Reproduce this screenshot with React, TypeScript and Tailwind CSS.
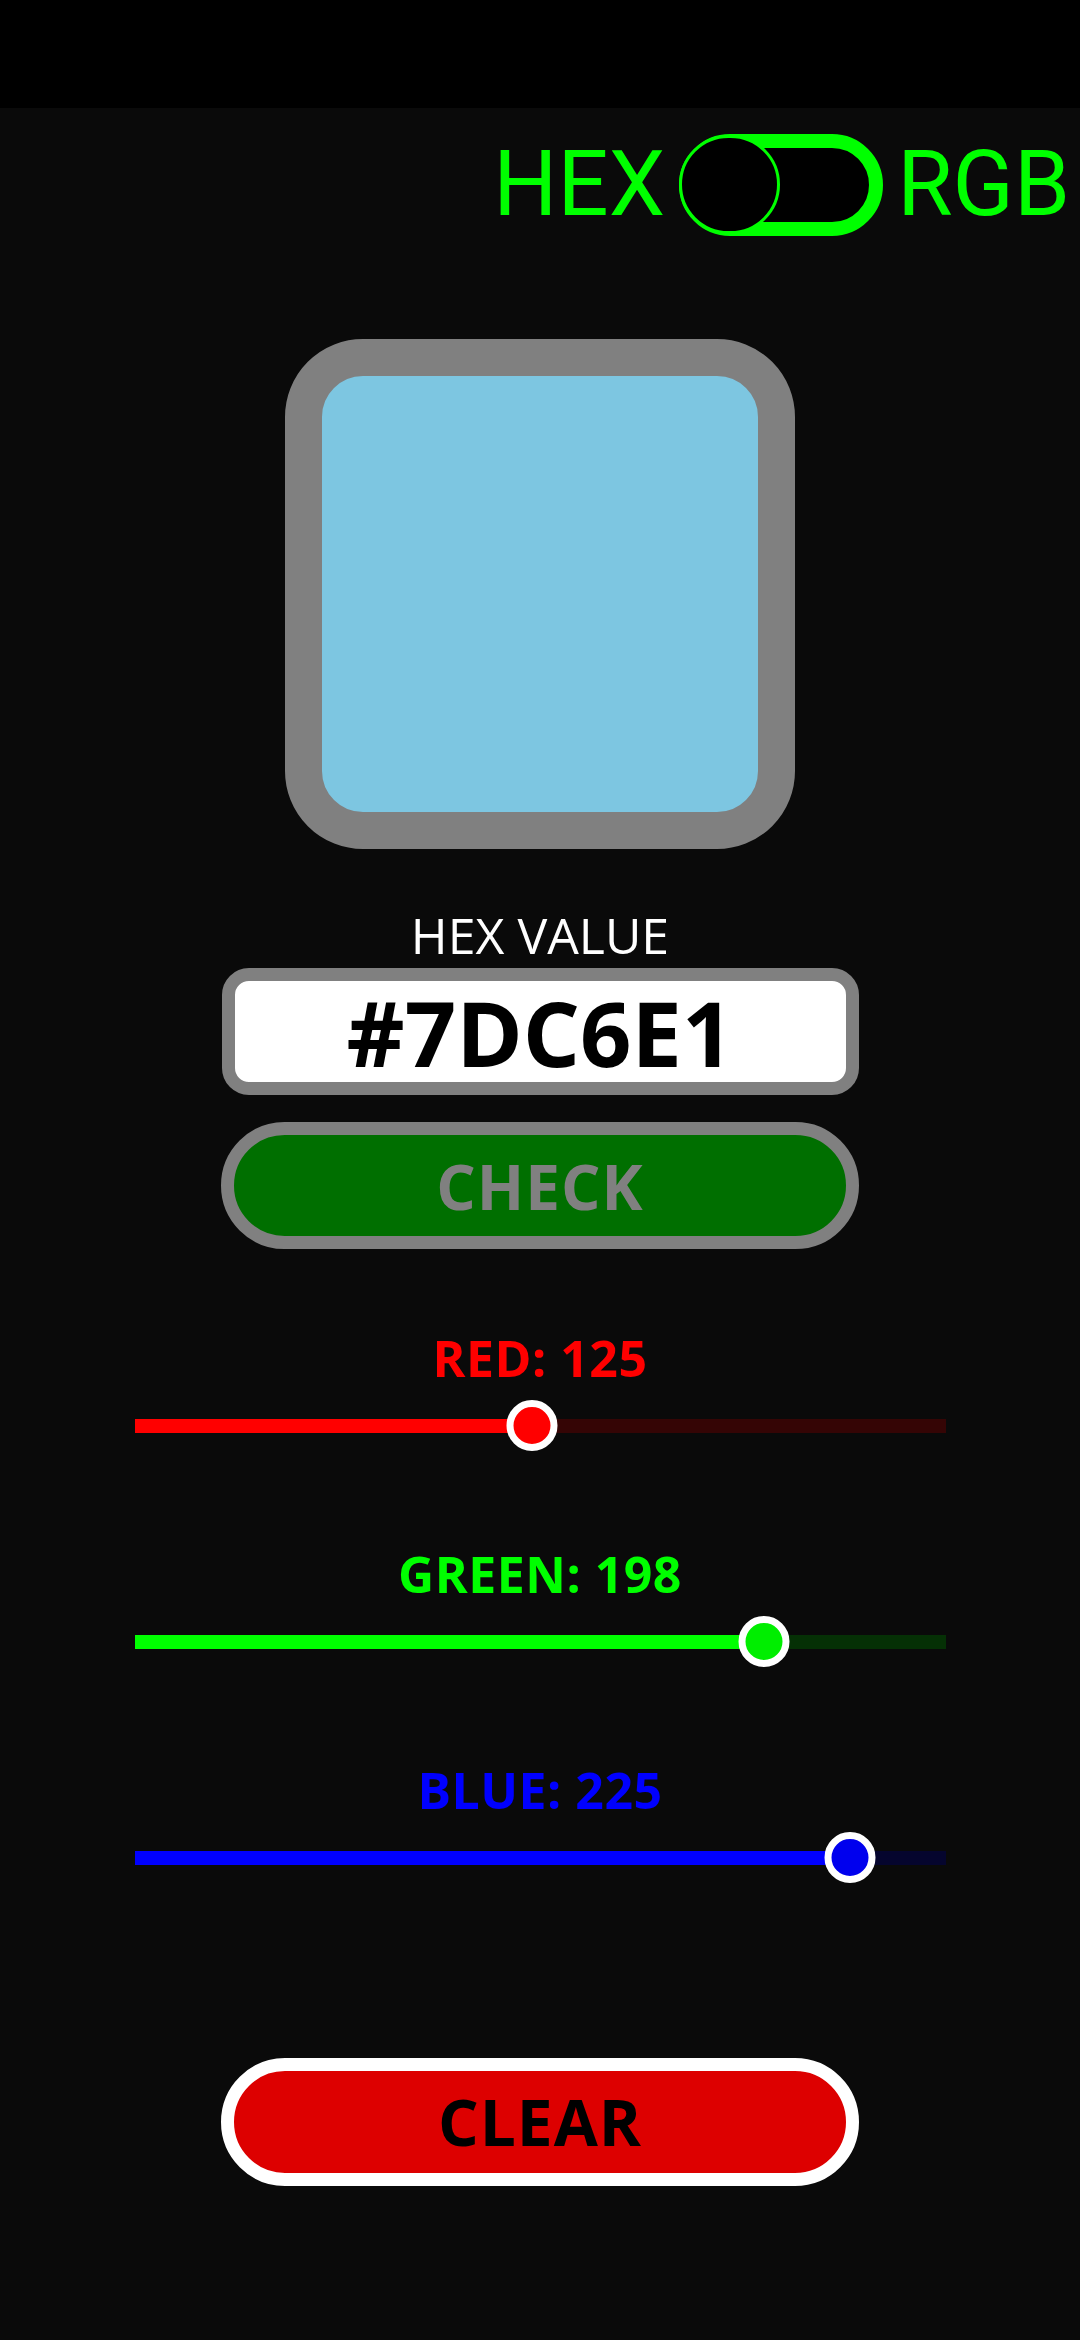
import React from "react";

type SliderDef = {
  label: string;
  value: number;
  textClass: string;
  fillClass: string;
  restClass: string;
  dotClass: string;
};

const sliders: SliderDef[] = [
  { label: "RED", value: 125, textClass: "text-[#ff0000]", fillClass: "bg-[#ff0000]", restClass: "bg-[#350505]", dotClass: "bg-[#ff0000]" },
  { label: "GREEN", value: 198, textClass: "text-[#00ff00]", fillClass: "bg-[#00ff00]", restClass: "bg-[#053005]", dotClass: "bg-[#00ee00]" },
  { label: "BLUE", value: 225, textClass: "text-[#0000ff]", fillClass: "bg-[#0000ff]", restClass: "bg-[#05052e]", dotClass: "bg-[#0000ee]" },
];

function Slider({ s }: { s: SliderDef }) {
  const pct = (s.value / 255) * 100;
  return (
    <div className="flex flex-col items-center">
      <div className={`font-['Open_Sans',sans-serif] font-bold text-[50px] leading-none tracking-[0.5px] ${s.textClass}`}>
        {s.label}: {s.value}
      </div>
      <div className="relative mt-[17px] h-[51px] w-[811px] flex items-center">
        <div className="flex h-[14px] w-full">
          <div className={`h-full ${s.fillClass}`} style={{ width: `${pct}%` }} />
          <div className={`h-full flex-1 ${s.restClass}`} />
        </div>
        <div
          className={`absolute top-0 h-[51px] w-[51px] -translate-x-1/2 rounded-full border-[7px] border-white ${s.dotClass}`}
          style={{ left: `${pct}%` }}
        />
      </div>
    </div>
  );
}

export default function App() {
  return (
    <div className="w-[1080px] min-h-[2340px] bg-[#0a0a0a] flex flex-col">
      <div className="h-[108px] bg-black" />
      <div className="mt-[25px] h-[104px] flex items-center justify-end pr-[10px] font-['Roboto',sans-serif] text-[#00ff00]">
        <span className="text-[90px] leading-none">HEX</span>
        <div className="relative ml-[14px] h-[102px] w-[204px]">
          <div className="h-full w-full rounded-full border-[14px] border-[#00ff00] bg-black" />
          <div className="absolute left-0 top-[1px] h-[99px] w-[101px] rounded-full border-[3px] border-[#00ff00] bg-black" />
        </div>
        <span className="ml-[14px] text-[90px] leading-none">RGB</span>
      </div>

      <div className="mt-[102px] self-center h-[510px] w-[510px] rounded-[78px] border-[37px] border-[#808080] bg-[#7dc6e1]" />

      <div className="mt-[61px] self-center font-['Open_Sans',sans-serif] text-[50px] leading-none text-white">
        HEX VALUE
      </div>

      <div className="mt-[8px] self-center flex h-[127px] w-[637px] items-center justify-center rounded-[27px] border-[13px] border-[#808080] bg-white">
        <span className="font-['Open_Sans',sans-serif] font-bold text-[90px] leading-none text-black">#7DC6E1</span>
      </div>

      <div className="mt-[27px] self-center flex h-[127px] w-[638px] items-center justify-center rounded-full border-[13px] border-[#808080] bg-[#006f00]">
        <span className="font-['Open_Sans',sans-serif] font-bold text-[62px] leading-none tracking-[1px] text-[#808080]">CHECK</span>
      </div>

      <div className="mt-[84px] flex flex-col items-center gap-[98px]">
        {sliders.map((s) => (
          <Slider key={s.label} s={s} />
        ))}
      </div>

      <div className="mt-[175px] self-center flex h-[128px] w-[638px] items-center justify-center rounded-full border-[13px] border-white bg-[#dd0000]">
        <span className="font-['Open_Sans',sans-serif] font-bold text-[64px] leading-none tracking-[1px] text-black">CLEAR</span>
      </div>
    </div>
  );
}
